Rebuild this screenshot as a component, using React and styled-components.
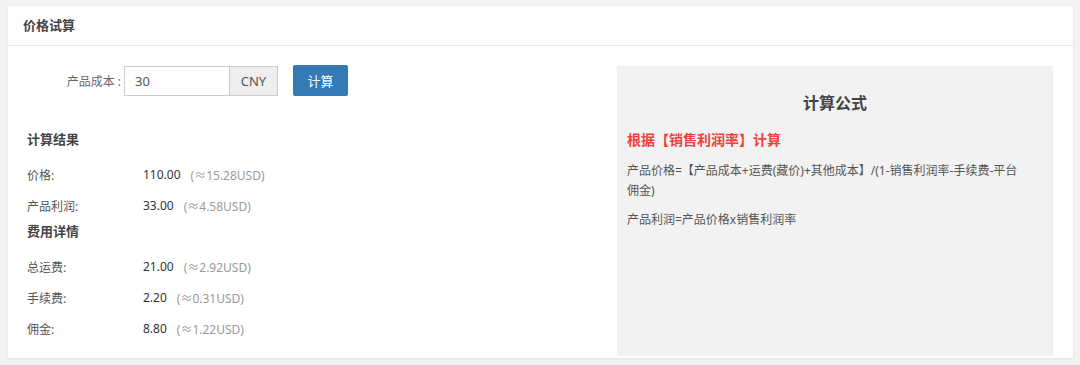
import React from "react";
import styled, { createGlobalStyle } from "styled-components";

const GlobalStyle = createGlobalStyle`
  html, body {
    margin: 0;
    padding: 0;
    background: #f3f3f4;
    font-family: "Noto Sans", "Noto Sans CJK SC", sans-serif;
    color: #333;
  }
  * { box-sizing: border-box; }
`;

const results = [
  { label: "价格:", value: "110.00", usd: "(≈15.28USD)" },
  { label: "产品利润:", value: "33.00", usd: "(≈4.58USD)" },
];

const fees = [
  { label: "总运费:", value: "21.00", usd: "(≈2.92USD)" },
  { label: "手续费:", value: "2.20", usd: "(≈0.31USD)" },
  { label: "佣金:", value: "8.80", usd: "(≈1.22USD)" },
];

const App = () => {
  return (
    <>
      <GlobalStyle />
      <Page>
        <Card>
          <CardHeader>价格试算</CardHeader>
          <CardBody>
            <LeftCol>
              <FormRow>
                <FormLabel>产品成本 :</FormLabel>
                <InputGroup>
                  <Input defaultValue="30" />
                  <Addon>CNY</Addon>
                </InputGroup>
                <PrimaryBtn>计算</PrimaryBtn>
              </FormRow>

              <SectionTitle $top={33}>计算结果</SectionTitle>
              <Rows>
                {results.map((r) => (
                  <Row key={r.label}>
                    <RowLabel>{r.label}</RowLabel>
                    <RowValue>{r.value}</RowValue>
                    <RowUsd>{r.usd}</RowUsd>
                  </Row>
                ))}
              </Rows>

              <SectionTitle $top={0}>费用详情</SectionTitle>
              <Rows>
                {fees.map((r) => (
                  <Row key={r.label}>
                    <RowLabel>{r.label}</RowLabel>
                    <RowValue>{r.value}</RowValue>
                    <RowUsd>{r.usd}</RowUsd>
                  </Row>
                ))}
              </Rows>
            </LeftCol>

            <FormulaPanel>
              <FormulaTitle>计算公式</FormulaTitle>
              <FormulaBasis>根据【销售利润率】计算</FormulaBasis>
              <FormulaText>
                产品价格=【产品成本+运费(藏价)+其他成本】/(1-销售利润率-手续费-平台
                <br />
                佣金)
              </FormulaText>
              <FormulaText>产品利润=产品价格x销售利润率</FormulaText>
            </FormulaPanel>
          </CardBody>
        </Card>
      </Page>
    </>
  );
};

const Page = styled.div`
  padding: 6px 7px 7px 8px;
`;

const Card = styled.div`
  background: #fff;
  box-shadow: 0 1px 3px rgba(0, 0, 0, 0.08);
  height: 352px;
`;

const CardHeader = styled.div`
  height: 40px;
  line-height: 39px;
  padding-left: 15px;
  font-size: 13px;
  font-weight: bold;
  color: #444;
  border-bottom: 1px solid #e7e7e7;
`;

const CardBody = styled.div`
  display: flex;
  padding: 19px 20px 0 19px;
`;

const LeftCol = styled.div`
  flex: 1;
`;

const FormRow = styled.div`
  display: flex;
  align-items: center;
  height: 31px;
`;

const FormLabel = styled.label`
  width: 94px;
  margin-right: 3px;
  text-align: right;
  font-size: 12px;
  color: #666;
`;

const InputGroup = styled.div`
  display: flex;
  height: 30px;
`;

const Input = styled.input`
  width: 105px;
  height: 30px;
  border: 1px solid #ccc;
  border-right: none;
  padding: 0 10px;
  font-size: 13px;
  font-family: inherit;
  color: #555;
  outline: none;
`;

const Addon = styled.span`
  width: 49px;
  display: flex;
  align-items: center;
  justify-content: center;
  background: #eee;
  border: 1px solid #ccc;
  font-size: 13px;
  color: #555;
`;

const PrimaryBtn = styled.button`
  margin-left: 15px;
  width: 55px;
  height: 31px;
  border: none;
  border-radius: 2px;
  background: #337ab7;
  color: #fff;
  font-size: 13px;
  font-family: inherit;
  cursor: pointer;
`;

const SectionTitle = styled.div`
  margin-top: ${(p) => p.$top}px;
  line-height: 20px;
  font-size: 13px;
  font-weight: bold;
  color: #444;
`;

const Rows = styled.div`
  margin-top: 10px;
`;

const Row = styled.div`
  display: flex;
  align-items: center;
  height: 31px;
  font-size: 12px;
`;

const RowLabel = styled.span`
  width: 116px;
  color: #555;
`;

const RowValue = styled.span`
  color: #333;
`;

const RowUsd = styled.span`
  margin-left: 10px;
  color: #999;
`;

const FormulaPanel = styled.div`
  width: 436px;
  height: 290px;
  margin-top: 1px;
  background: #f2f2f2;
  padding: 26px 10px 0 10px;
`;

const FormulaTitle = styled.div`
  text-align: center;
  font-size: 16px;
  font-weight: bold;
  line-height: 22px;
  color: #444;
`;

const FormulaBasis = styled.div`
  margin-top: 16px;
  font-size: 14px;
  font-weight: bold;
  line-height: 20px;
  color: #f2403c;
`;

const FormulaText = styled.p`
  margin: 11px 0 0;
  font-size: 12px;
  line-height: 20px;
  color: #555;
  & + & {
    margin-top: 9px;
  }
`;

export default App;
